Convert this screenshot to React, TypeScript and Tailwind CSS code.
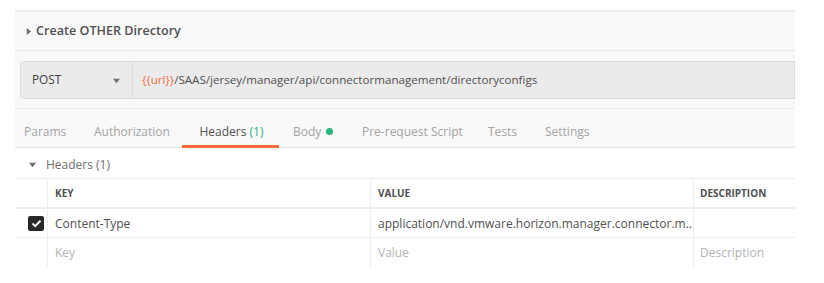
import React from 'react';

const Caret = ({ down }: { down?: boolean }) => (
    <svg width="7" height="7" viewBox="0 0 8 8" className="shrink-0">
        {down ? <path d="M0 2 L8 2 L4 7 Z" fill="#707070" /> : <path d="M2 0 L7 4 L2 8 Z" fill="#707070" />}
    </svg>
);

export default function App() {
    return (
        <div
            className="w-[824px] h-[283px] bg-white pt-[10px] pl-[15px] pr-[29px] text-[#505050]"
            style={{ fontFamily: '"Open Sans", "Noto Sans", sans-serif' }}
        >
            {/* cut off tab strip above */}
            <div className="h-[2px] bg-[#eeeeee]" />

            {/* Request name */}
            <div className="h-[39px] bg-[#f9f9f9] border-b border-[#e6e6e6] flex items-center pl-[10px] gap-[4px]">
                <Caret />
                <span className="text-[12.6px] font-semibold text-[#505050] leading-none">Create OTHER Directory</span>
            </div>

            {/* URL bar */}
            <div className="bg-[#f9f9f9] pt-[10px] pb-[9px] pl-[5px] border-b border-[#ececec]">
                <div className="h-[38px] flex border border-[#dcdcdc] rounded-l-[3px] bg-[#ebebeb]">
                    <div className="w-[112px] flex items-center justify-between pl-[11px] pr-[12px] border-r border-[#dcdcdc] text-[11.8px] text-[#404040]">
                        <span>POST</span>
                        <Caret down />
                    </div>
                    <div className="flex items-center pl-[9px] text-[11.6px] text-[#505050]">
                        <span className="text-[#f26b3a]">{'{{url}}'}</span>
                        <span>/SAAS/jersey/manager/api/connectormanagement/directoryconfigs</span>
                    </div>
                </div>
            </div>

            {/* Tabs */}
            <div className="h-[39px] pt-[7px] bg-[#f9f9f9] border-b border-[#e6e6e6] flex items-stretch text-[12px] text-[#a3a3a3]">
                <div className="flex items-center pl-[9px] w-[79px]">Params</div>
                <div className="flex items-center w-[88px]">Authorization</div>
                <div className="flex items-center justify-center w-[97px] relative text-[#505050] pl-[2px]">
                    <span>
                        Headers <span className="text-[#26b47f]">(1)</span>
                    </span>
                    <div className="absolute left-0 right-0 bottom-[-1px] h-[3px] bg-[#f26b3a]" />
                </div>
                <div className="flex items-center pl-[14px] w-[83px] gap-[5px]">
                    Body <span className="w-[7px] h-[7px] rounded-full bg-[#26b47f]" />
                </div>
                <div className="flex items-center w-[126px]">Pre-request Script</div>
                <div className="flex items-center w-[57px]">Tests</div>
                <div className="flex items-center">Settings</div>
            </div>

            {/* Headers section */}
            <div className="h-[30px] pt-[3px] flex items-center pl-[14px] gap-[10px] text-[12px] text-[#707070]">
                <Caret down />
                <span>Headers (1)</span>
            </div>

            <div className="border-t border-[#ececec] text-[12px]">
                <div className="grid grid-cols-[33px_323px_323px_1fr] h-[30px] pt-[1px] border-b-2 border-[#ededed] text-[10px] font-bold text-[#505050]">
                    <div className="border-r border-[#ececec]" />
                    <div className="flex items-center pl-[7px] border-r border-[#ececec]">KEY</div>
                    <div className="flex items-center pl-[7px] border-r border-[#ececec]">VALUE</div>
                    <div className="flex items-center pl-[6px]">DESCRIPTION</div>
                </div>
                <div className="grid grid-cols-[33px_323px_323px_1fr] h-[29px] pt-[1px] border-b border-[#ededed] text-[#505050]">
                    <div className="flex items-center pl-[13px] border-r border-[#ececec]">
                        <div className="w-[16px] h-[15px] rounded-[2px] bg-[#282828] flex items-center justify-center">
                            <svg width="11" height="9" viewBox="0 0 11 9">
                                <path d="M1.5 4.5 L4.2 7.2 L9.5 1.8" stroke="white" strokeWidth="2" fill="none" />
                            </svg>
                        </div>
                    </div>
                    <div className="flex items-center pl-[7px] border-r border-[#ececec]">Content-Type</div>
                    <div className="flex items-center pl-[7px] border-r border-[#ececec] whitespace-nowrap overflow-hidden">
                        application/vnd.vmware.horizon.manager.connector.m...
                    </div>
                    <div />
                </div>
                <div className="grid grid-cols-[33px_323px_323px_1fr] h-[29px] text-[#b3b3b3]">
                    <div className="border-r border-[#ececec]" />
                    <div className="flex items-center pl-[7px] border-r border-[#ececec]">Key</div>
                    <div className="flex items-center pl-[7px] border-r border-[#ececec]">Value</div>
                    <div className="flex items-center pl-[6px]">Description</div>
                </div>
            </div>
        </div>
    );
}
